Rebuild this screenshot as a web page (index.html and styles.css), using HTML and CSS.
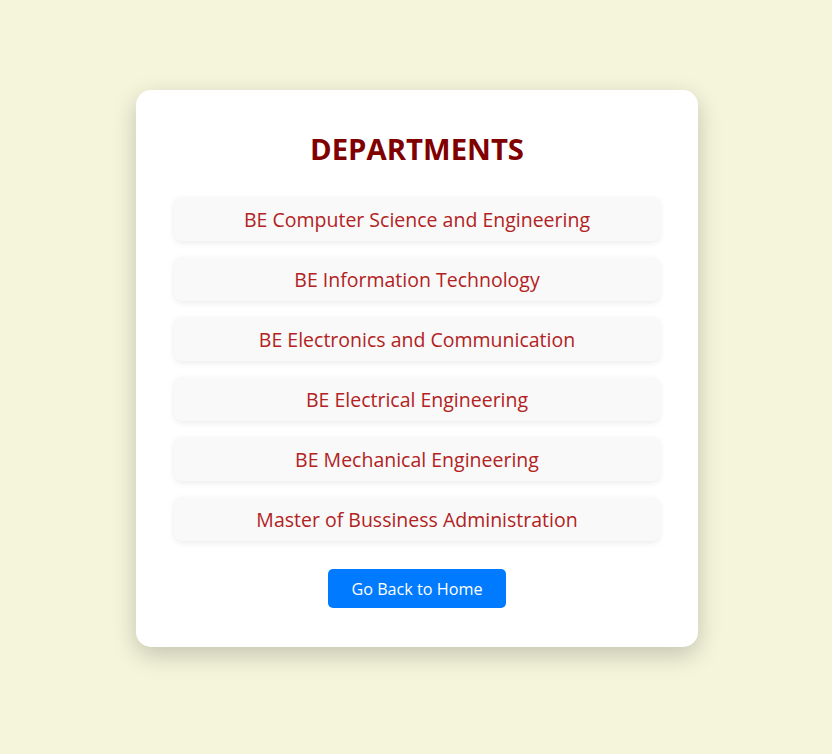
FILE: index.html
```html
<!DOCTYPE html>
<html lang="en">
<head>
<meta charset="utf-8">
<title>Departments</title>
<link rel="stylesheet" href="styles.css">
</head>
<body>
<main class="card">
  <h1 class="title">DEPARTMENTS</h1>
  <ul class="dept-list">
    <li class="dept">BE Computer Science and Engineering</li>
    <li class="dept">BE Information Technology</li>
    <li class="dept">BE Electronics and Communication</li>
    <li class="dept">BE Electrical Engineering</li>
    <li class="dept">BE Mechanical Engineering</li>
    <li class="dept">Master of Bussiness Administration</li>
  </ul>
  <a class="home-btn" href="#">Go Back to Home</a>
</main>
</body>
</html>
```
FILE: styles.css
```css
html, body {
  margin: 0;
  padding: 0;
}
body {
  background: #f5f5dc;
  font-family: "Open Sans", "Noto Sans", sans-serif;
  display: flex;
  justify-content: center;
  padding: 90px 0 0 2px;
  min-height: 754px;
  box-sizing: border-box;
}
.card {
  width: 562px;
  height: 557px;
  box-sizing: border-box;
  background: #fff;
  border-radius: 15px;
  box-shadow: 0 8px 24px rgba(0, 0, 0, 0.2);
  padding: 40px 38px 0;
  display: flex;
  flex-direction: column;
  align-items: center;
}
.title {
  margin: 0;
  color: #800000;
  font-size: 29.3px;
  font-weight: 700;
  line-height: 38px;
}
.dept-list {
  list-style: none;
  margin: 29px 0 0;
  padding: 0;
  width: 486px;
  display: flex;
  flex-direction: column;
  gap: 16px;
}
.dept {
  height: 44px;
  display: flex;
  align-items: center;
  justify-content: center;
  background: #f9f9f9;
  border-radius: 8px;
  box-shadow: 0 2px 6px rgba(0, 0, 0, 0.08);
  color: #b22222;
  font-size: 19.5px;
}
.home-btn {
  margin-top: 28px;
  width: 178px;
  height: 39px;
  display: flex;
  align-items: center;
  justify-content: center;
  background: #007bff;
  color: #fff;
  text-decoration: none;
  border-radius: 5px;
  font-size: 16.2px;
}
```
